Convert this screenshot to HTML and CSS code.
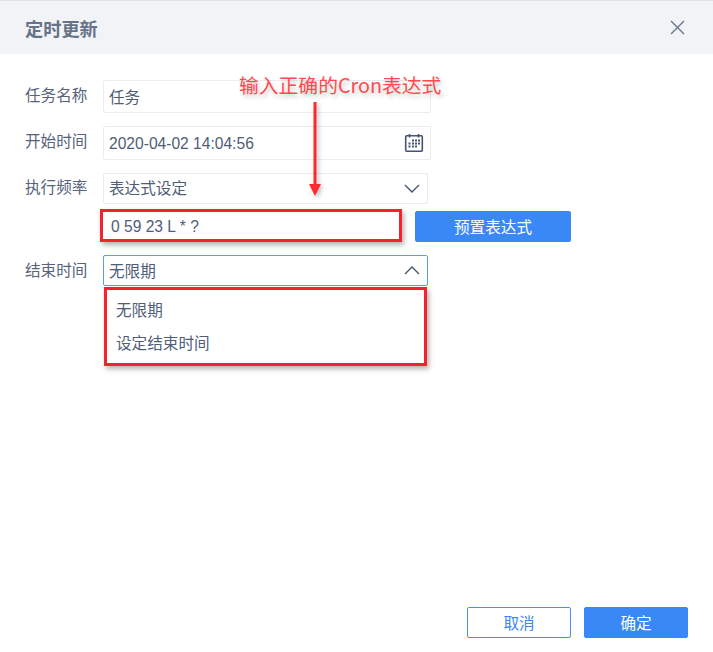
FILE: index.html
```html
<!DOCTYPE html>
<html lang="zh-CN">
<head>
<meta charset="utf-8">
<title>定时更新</title>
<link rel="stylesheet" href="styles.css">
</head>
<body>
<div class="dialog">
  <header class="header">
    <h1 class="title">定时更新</h1>
    <svg class="close" width="16" height="16" viewBox="0 0 16 16"><path d="M2 2 L15 15 M15 2 L2 15" stroke="#68758c" stroke-width="1.4" fill="none"/></svg>
  </header>
  <main class="form">
    <div class="row row-name">
      <label class="label">任务名称</label>
      <div class="field field-wide field-cjk">任务</div>
    </div>
    <div class="row row-start">
      <label class="label">开始时间</label>
      <div class="field field-wide field-split field-date">
        <span>2020-04-02 14:04:56</span>
        <svg class="cal" width="20" height="20" viewBox="0 0 20 20">
          <rect x="1.700" y="2.700" width="16.600" height="15.600" rx="1" fill="none" stroke="#46556f" stroke-width="1.600"/>
          <path d="M5.500 1 V4.500 M14.500 1 V4.500" stroke="#46556f" stroke-width="1.600"/>
          <path d="M8 6.500h2v2H8zM11 6.500h2v2h-2zM14 6.500h2v2h-2zM4.500 9.500h2v2h-2zM8 9.500h2v2H8zM11 9.500h2v2h-2zM14 9.500h2v2h-2zM4.500 12.500h2v2h-2zM8 12.500h2v2H8zM11 12.500h2v2h-2z" fill="#46556f"/>
        </svg>
      </div>
    </div>
    <div class="row row-freq">
      <label class="label">执行频率</label>
      <div class="field field-select field-split field-cjk">
        <span>表达式设定</span>
        <svg width="16" height="9" viewBox="0 0 16 9"><path d="M1 1 L8 8 L15 1" fill="none" stroke="#46556f" stroke-width="1.400"/></svg>
      </div>
    </div>
    <div class="row row-cron">
      <span class="label"></span>
      <div class="cron"><span>0 59 23 L * ?</span></div>
      <button class="btn btn-primary btn-preset" type="button">预置表达式</button>
    </div>
    <div class="row row-end">
      <label class="label">结束时间</label>
      <div class="field field-select field-split field-open">
        <span>无限期</span>
        <svg width="16" height="9" viewBox="0 0 16 9"><path d="M1 8 L8 1 L15 8" fill="none" stroke="#46556f" stroke-width="1.400"/></svg>
      </div>
    </div>
    <div class="row row-menu">
      <span class="label"></span>
      <ul class="menu">
        <li class="menu-item">无限期</li>
        <li class="menu-item menu-item-last">设定结束时间</li>
      </ul>
    </div>
  </main>
  <footer class="footer">
    <button class="btn btn-outline" type="button">取消</button>
    <button class="btn btn-primary" type="button">确定</button>
  </footer>
  <div class="note">输入正确的Cron表达式</div>
  <svg class="arrow" width="14" height="96" viewBox="0 0 14 96"><path d="M7 0 V83" stroke="#ff2a2f" stroke-width="3"/><path d="M1 82 H13 L7 94 Z" fill="#ff2a2f"/></svg>
</div>
</body>
</html>
```
FILE: styles.css
```css
* { box-sizing: border-box; }
html, body { margin: 0; padding: 0; }
body {
  background: #fff;
  font-family: "Liberation Sans", "Noto Sans CJK SC", sans-serif;
  font-size: 15.6px;
  color: #4f5d78;
}
.dialog {
  position: relative;
  width: 713px;
  height: 652px;
  display: flex;
  flex-direction: column;
  border-top: 1px solid #dfe1e4;
}
.header {
  flex: none;
  height: 53px;
  background: #f1f3f7;
  display: flex;
  align-items: center;
  justify-content: space-between;
  padding: 0 28px 0 25px;
}
.title {
  margin: 0;
  font-size: 18.200px;
  font-weight: 700;
  color: #667287;
}
.close { margin-top: -2px; }
.form {
  flex: 1;
  padding: 26px 0 0 25px;
}
.row { display: flex; align-items: center; }
.label { flex: none; width: 78px; color: #56637b; padding-bottom: 6px; }
.row-name { height: 33px; }
.row-start { height: 34px; margin-top: 13px; }
.row-freq { height: 31px; margin-top: 13px; }
.row-cron { height: 33px; margin-top: 5px; }
.row-end { height: 31px; margin-top: 13px; }
.row-end .label { padding-bottom: 4px; }
.row-menu { align-items: flex-start; margin-top: 1px; }
.field {
  height: 100%;
  border: 1px solid #eaecf0;
  border-radius: 2px;
  padding: 0 5px;
  display: flex;
  align-items: center;
  background: #fff;
}
.field-wide { width: 328px; }
.field-select { width: 325px; }
.field-split { justify-content: space-between; padding-right: 7px; }
.row-start .field-split { padding-right: 6px; }
.field-cjk > span, .field-cjk { padding-bottom: 2px; }
.field-cjk svg { margin-top: 2px; }
.field-date > span { padding-top: 2px; }
.field-open { border-color: #5b9bf0; }
.field-open > span { padding-bottom: 2px; }
.cron {
  flex: none;
  width: 302px;
  height: 33px;
  margin-left: -3px;
  border: 3px solid #f5222d;
  box-shadow: 2px 3px 5px rgba(0,0,0,.3);
  padding: 2px 8px 0;
  display: flex;
  align-items: center;
}
.btn {
  font: inherit;
  border-radius: 2px;
  height: 31px;
  width: 104px;
  padding: 0 0 2px;
  cursor: pointer;
}
.btn-primary { background: #3a88f5; border: 1px solid #3a88f5; color: #fff; }
.btn-outline { background: #fff; border: 1.500px solid #4a90f0; color: #3a88f5; }
.btn-preset { width: 156px; margin-left: 13px; margin-top: 2px; }
.menu {
  list-style: none;
  margin: 0 0 0 1px;
  padding: 5px 0 0 9px;
  width: 323px;
  height: 79px;
  border: 3px solid #f5222d;
  box-shadow: 2px 3px 5px rgba(0,0,0,.3);
}
.menu-item { height: 32px; line-height: 32px; }
.menu-item-last { padding-top: 1px; }
.footer {
  flex: none;
  display: flex;
  justify-content: flex-end;
  gap: 13px;
  padding: 0 25px 14px 0;
}
.note {
  position: absolute;
  left: 239px;
  top: 70px;
  font-family: "Noto Sans CJK SC", "Noto Sans", sans-serif;
  font-size: 19.800px;
  line-height: 28px;
  font-weight: 400;
  color: #ff4a4f;
  text-shadow: 2px 3px 4px rgba(0,0,0,.22);
  white-space: nowrap;
}
.arrow {
  position: absolute;
  left: 308px;
  top: 101px;
  filter: drop-shadow(2px 2px 2px rgba(0,0,0,.25));
}
```
